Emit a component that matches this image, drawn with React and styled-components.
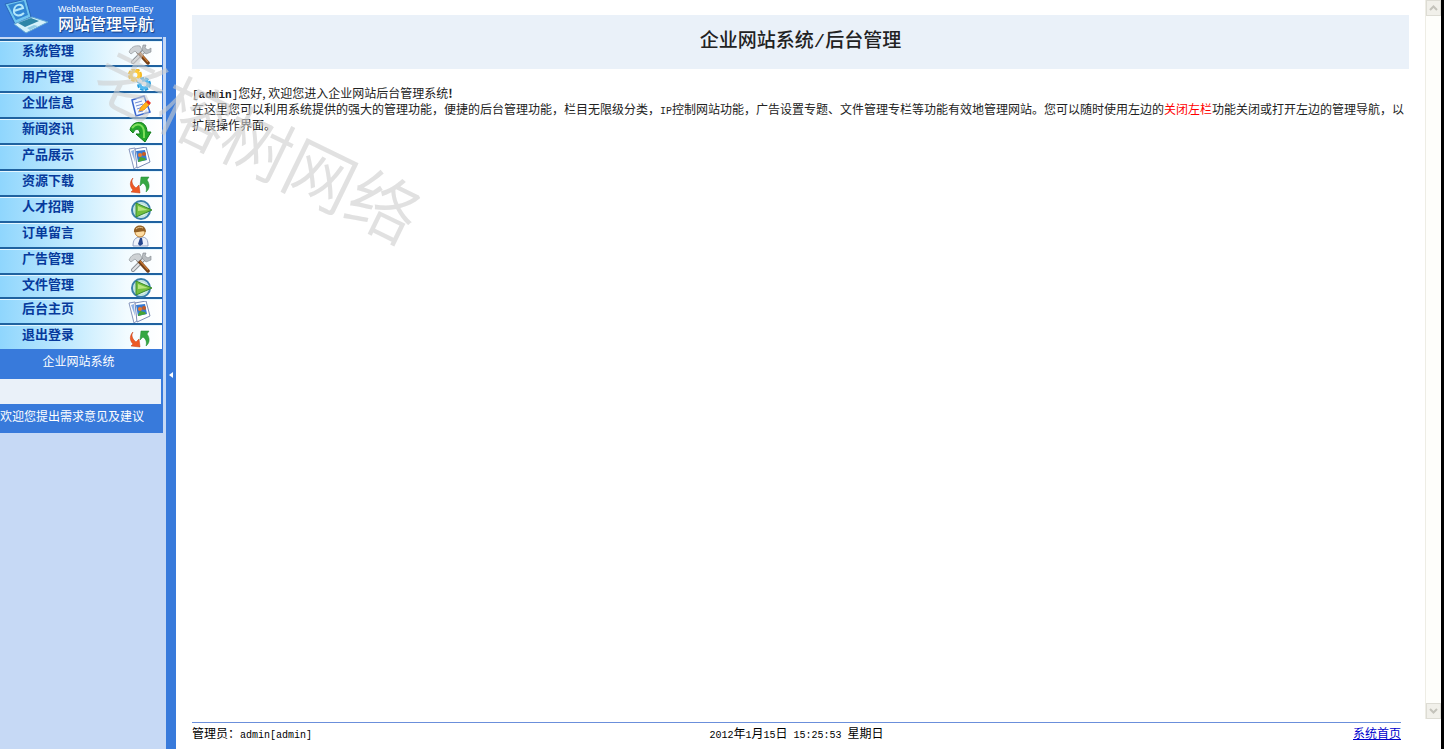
import React from 'react';
import styled, { createGlobalStyle } from 'styled-components';

const blue = '#387adb'
const pale = '#eaf1f9'
const song = "'Liberation Mono', 'Noto Sans CJK SC', monospace"

const GlobalStyle = createGlobalStyle`
  * {
    box-sizing: border-box;
  }
  body {
    margin: 0;
    background: #fff;
    color: #222;
    font-family: 'Noto Sans CJK SC', sans-serif;
    font-size: 12px;
    line-height: 16px;
  }
`
const Page = styled.div`
  position: relative;
  display: flex;
  min-height: 100vh;
  overflow: hidden;
`
const Sidebar = styled.aside`
  flex: 0 0 166px;
  padding-right: 3px;
  background: #c6d9f5;
`
const Brand = styled.header`
  display: flex;
  align-items: flex-start;
  gap: 8px;
  height: 37px;
  margin-right: -3px;
  padding-left: 4px;
  background: ${blue};
  color: #fff;
`
const BrandText = styled.div`
  padding-top: 3px;
`
const BrandName = styled.div`
  font-family: 'Liberation Sans', sans-serif;
  font-size: 9px;
  line-height: 12px;
  white-space: nowrap;
`
const BrandTitle = styled.h1`
  margin: 0;
  font-size: 16px;
  font-weight: 500;
  line-height: 16px;
  text-shadow: 1px 1px 1px #143c80;
  white-space: nowrap;
`
const Menu = styled.nav`
  padding-top: 2px;
  border-right: 1px solid ${blue};
`
const MenuLink = styled.a`
  display: flex;
  align-items: flex-start;
  justify-content: space-between;
  height: ${props => props.$short ? 24 : 26}px;
  padding: 0 10px 0 22px;
  border-top: 2px solid #1f62a0;
  background: linear-gradient(to right, #8fd6fd, #c4ebfe 45%, #f2fbff 78%, #fff);
  box-shadow: inset 0 1px 0 #e4f6ff;
  color: #063a9c;
  font-size: 13px;
  font-weight: 700;
  line-height: 18px;
  text-decoration: none;
`
const MenuIcon = styled.svg`
  width: 24px;
  height: 22px;
  margin-top: 2px;
`
const Strip = styled.div`
  height: ${props => props.$center ? 30 : 29}px;
  padding: 4px 6px 0 0;
  background: ${blue};
  color: #fff;
  text-align: ${props => props.$center ? 'center' : 'left'};
  white-space: nowrap;
`
const Blank = styled.div`
  height: 25px;
  border-right: 2px solid ${blue};
  background: ${pale};
`
const Toggle = styled.button`
  display: flex;
  flex: 0 0 10px;
  align-items: center;
  justify-content: center;
  padding: 0;
  border: 0;
  background: ${blue};
`
const Main = styled.main`
  display: flex;
  flex: 1;
  flex-direction: column;
  min-width: 0;
  border-right: 3px solid #000;
`
const Frame = styled.div`
  display: flex;
  flex: 1;
`
const Content = styled.section`
  flex: 1;
  min-width: 0;
  padding: 15px 16px 0;
`
const Title = styled.h2`
  display: flex;
  align-items: center;
  justify-content: center;
  height: 54px;
  margin: 0 0 16px;
  background: ${pale};
  font-family: ${song};
  font-size: 19px;
  font-weight: 500;
`
const Text = styled.p`
  margin: 0;
`
const Mono = styled.span`
  font-family: ${song};
  font-size: ${props => props.$bold ? 11 : 10}px;
  line-height: 10px;
`
const Red = styled.span`
  color: #f00;
`
const Scrollbar = styled.div`
  display: flex;
  flex: 0 0 16px;
  flex-direction: column;
  justify-content: space-between;
  border-left: 1px solid #eeede5;
  background: #fefefb;
`
const ScrollButton = styled.button`
  display: flex;
  align-items: center;
  justify-content: center;
  height: 16px;
  padding: 0;
  border: 1px solid #dddcd4;
  background: #f1f0ea;
`
const Footer = styled.footer`
  display: grid;
  grid-template-columns: 1fr auto 1fr;
  height: 27px;
  margin: 3px 40px 0 16px;
  padding-top: 2px;
  border-top: 1px solid #6b8fdb;
  color: #000;
`
const HomeLink = styled.a`
  justify-self: end;
  color: #00c;
`
const Watermark = styled.div`
  position: absolute;
  top: 106px;
  left: 84px;
  transform: rotate(26deg);
  color: rgba(205, 205, 205, .6);
  font-size: 70px;
  font-weight: 350;
  line-height: 72px;
  white-space: nowrap;
  pointer-events: none;
`

const Tools = () => <>
  <path d="M5 19 16 8" stroke="#8b9096" strokeWidth="4" strokeLinecap="round" />
  <path d="M5 19 16 8" stroke="#e2e4e6" strokeWidth="2" strokeLinecap="round" />
  <path d="M15 2 14 7l4 4 5-2V5l-3 2-3-2 1-3z" fill="#b8bdc1" stroke="#858b90" strokeWidth=".6" />
  <path d="m10 9 10 11" stroke="#744018" strokeWidth="3.5" strokeLinecap="round" />
  <path d="m12 10 8 9" stroke="#c87934" strokeWidth="1.2" />
  <path d="M1 9C3 4 7 2 12 3l2 4-4 4-3-3-4 3z" fill="#ced2d5" stroke="#858b90" strokeWidth=".6" />
</>

const Gears = () => <>
  <circle cx="7" cy="6" r="5" stroke="#f3b51b" strokeWidth="4" strokeDasharray="3 1" />
  <circle cx="7" cy="6" r="4" stroke="#ffca38" strokeWidth="3" />
  <circle cx="16" cy="15" r="5" stroke="#249ddd" strokeWidth="4" strokeDasharray="3 1" />
  <circle cx="16" cy="15" r="4" stroke="#54baf0" strokeWidth="3" />
  <path d="m8 9 6 2 1 4-5-2z" fill="#e4eef4" />
</>

const Note = () => <>
  <path d="m4 5 12-4 6 16-14 4z" fill="#f4f8ff" stroke="#3865ce" strokeWidth="1.5" />
  <path d="m7 8 7-2M8 11l7-2M9 14l6-2M10 17l5-1" stroke="#6d8bd7" />
  <path d="m11 16 2-4 6-6 3 3-6 6z" fill="#ffb21d" stroke="#d47316" strokeWidth=".6" />
  <path d="m18 7 2-2 3 3-2 2z" fill="#e73222" />
</>

const Down = () => <>
  <path d="M2 9C4-1 19-2 19 11h4l-6 10-9-8h4C12 8 8 6 5 12z" fill="#24a72a" stroke="#127c19" />
  <path d="M4 7c5-6 12-4 12 5v5" stroke="#7cdd5a" strokeWidth="2" />
</>

const Photos = () => <>
  <path d="m1 2 6-1 3 18-4 3z" fill="#fff" stroke="#8796bd" />
  <path d="m3 4 3-1 1 12z" fill="#8eb2e7" />
  <path d="M7 2 18 0l4 15-13 6z" fill="#fff" stroke="#7b8bb5" />
  <path d="m8 4 9-1 2 10-9 2z" fill="#377ad2" />
  <circle cx="12" cy="8" r="2" fill="#f07a2a" />
  <circle cx="16" cy="7" r="2" fill="#c65a24" />
  <path d="m10 14 2-4 5 1 1 2-8 2z" fill="#45a435" />
</>

const Refresh = () => <>
  <path d="M5 5C3 8 4 12 8 15l3-3 1 8-9-1 2-2C1 13 2 8 5 5z" fill="#ee5a25" stroke="#c23b12" strokeWidth=".5" />
  <path d="M18 19c1-4 0-7-3-9l-3 3 1-9h8l-2 3c3 4 3 9-1 12z" fill="#35a743" stroke="#208b35" strokeWidth=".5" />
</>

const Play = () => <>
  <circle cx="13" cy="11" r="9" fill="#d8f0ed" stroke="#397fab" strokeWidth="2" />
  <circle cx="13" cy="11" r="7" stroke="#b5dcd6" />
  <path d="m8 4 16 7-16 7z" fill="#74be3d" stroke="#378b2d" />
  <path d="m10 7 10 4-10 1z" fill="#b7e47d" />
</>

const Person = () => <>
  <path d="M5 21c0-6 2-9 8-9s7 3 7 9z" fill="#edf2fb" stroke="#94a5c5" />
  <circle cx="12" cy="7" r="5" fill="#ffdda2" stroke="#b87d32" />
  <path d="M6 7c-1-8 12-9 12 0-4-2-7 1-12 0z" fill="#926025" />
  <path d="M8 4c2-2 5-2 7-1" stroke="#e3c28a" />
  <path d="m12 13-2 6 2 2 3-2-1-6z" fill="#26478e" />
</>

const links = [
  { name: '系统管理', icon: Tools },
  { name: '用户管理', icon: Gears },
  { name: '企业信息', icon: Note },
  { name: '新闻资讯', icon: Down },
  { name: '产品展示', icon: Photos },
  { name: '资源下载', icon: Refresh },
  { name: '人才招聘', icon: Play },
  { name: '订单留言', icon: Person },
  { name: '广告管理', icon: Tools },
  { name: '文件管理', icon: Play, short: true },
  { name: '后台主页', icon: Photos },
  { name: '退出登录', icon: Refresh },
]

const Logo = () => (
  <svg width="46" height="36" viewBox="0 0 46 36" aria-hidden="true">
    <path d="M1 4 22-1l5 18-16 7z" fill="#70c5ef" stroke="#2a67b8" />
    <path d="m4 5 16-4 4 14-12 5z" fill="#3287d3" />
    <path d="m10 11 9-3c-1-5-8-4-9 2s6 7 10 3" fill="none" stroke="#b5e8fb" strokeWidth="2" />
    <path d="m10 24 18-7 16 5-22 11z" fill="#d4f1fb" stroke="#60a6d4" />
    <path d="m14 23 13-5 8 3-14 6z" fill="#2e86a8" />
    <path d="m23 28 7-3 4 1-8 4z" fill="#92cde5" />
  </svg>
)

export default function App() {
  return <>
    <GlobalStyle />
    <Page>
      <Sidebar>
        <Brand>
          <Logo />
          <BrandText>
            <BrandName>WebMaster DreamEasy</BrandName>
            <BrandTitle>网站管理导航</BrandTitle>
          </BrandText>
        </Brand>
        <Menu>
          {links.map(({ name, icon: Icon, short }) => (
            <MenuLink href="#" key={name} $short={short}>
              {name}
              <MenuIcon viewBox="0 0 24 22" fill="none" aria-hidden="true"><Icon /></MenuIcon>
            </MenuLink>
          ))}
        </Menu>
        <Strip $center>企业网站系统</Strip>
        <Blank />
        <Strip>欢迎您提出需求意见及建议</Strip>
      </Sidebar>
      <Toggle aria-label="关闭左栏">
        <svg width="4" height="6" viewBox="0 0 4 6"><path d="M4 0v6L0 3z" fill="#fff" /></svg>
      </Toggle>
      <Main>
        <Frame>
          <Content>
            <Title>企业网站系统/后台管理</Title>
            <Text><Mono $bold>[<b>admin</b>]</Mono>您好, 欢迎您进入企业网站后台管理系统<b>!</b></Text>
            <Text>
              在这里您可以利用系统提供的强大的管理功能，便捷的后台管理功能，栏目无限级分类，<Mono>IP</Mono>控制网站功能，广告设置专题、文件管理专栏等功能有效地管理网站。您可以随时使用左边的<Red>关闭左栏</Red>功能关闭或打开左边的管理导航，以扩展操作界面。
            </Text>
          </Content>
          <Scrollbar>
            <ScrollButton aria-label="向上">
              <svg width="9" height="6" viewBox="0 0 9 6" fill="none" stroke="#c4c3bb" strokeWidth="2"><path d="m1 5 3.5-3.5L8 5" /></svg>
            </ScrollButton>
            <ScrollButton aria-label="向下">
              <svg width="9" height="6" viewBox="0 0 9 6" fill="none" stroke="#c4c3bb" strokeWidth="2"><path d="m1 1 3.5 3.5L8 1" /></svg>
            </ScrollButton>
          </Scrollbar>
        </Frame>
        <Footer>
          <span>管理员：<Mono>admin[admin]</Mono></span>
          <span><Mono>2012</Mono>年<Mono>1</Mono>月<Mono>15</Mono>日<Mono> 15:25:53 </Mono>星期日</span>
          <HomeLink href="#">系统首页</HomeLink>
        </Footer>
      </Main>
      <Watermark aria-hidden="true">老榕树网络</Watermark>
    </Page>
  </>
}
